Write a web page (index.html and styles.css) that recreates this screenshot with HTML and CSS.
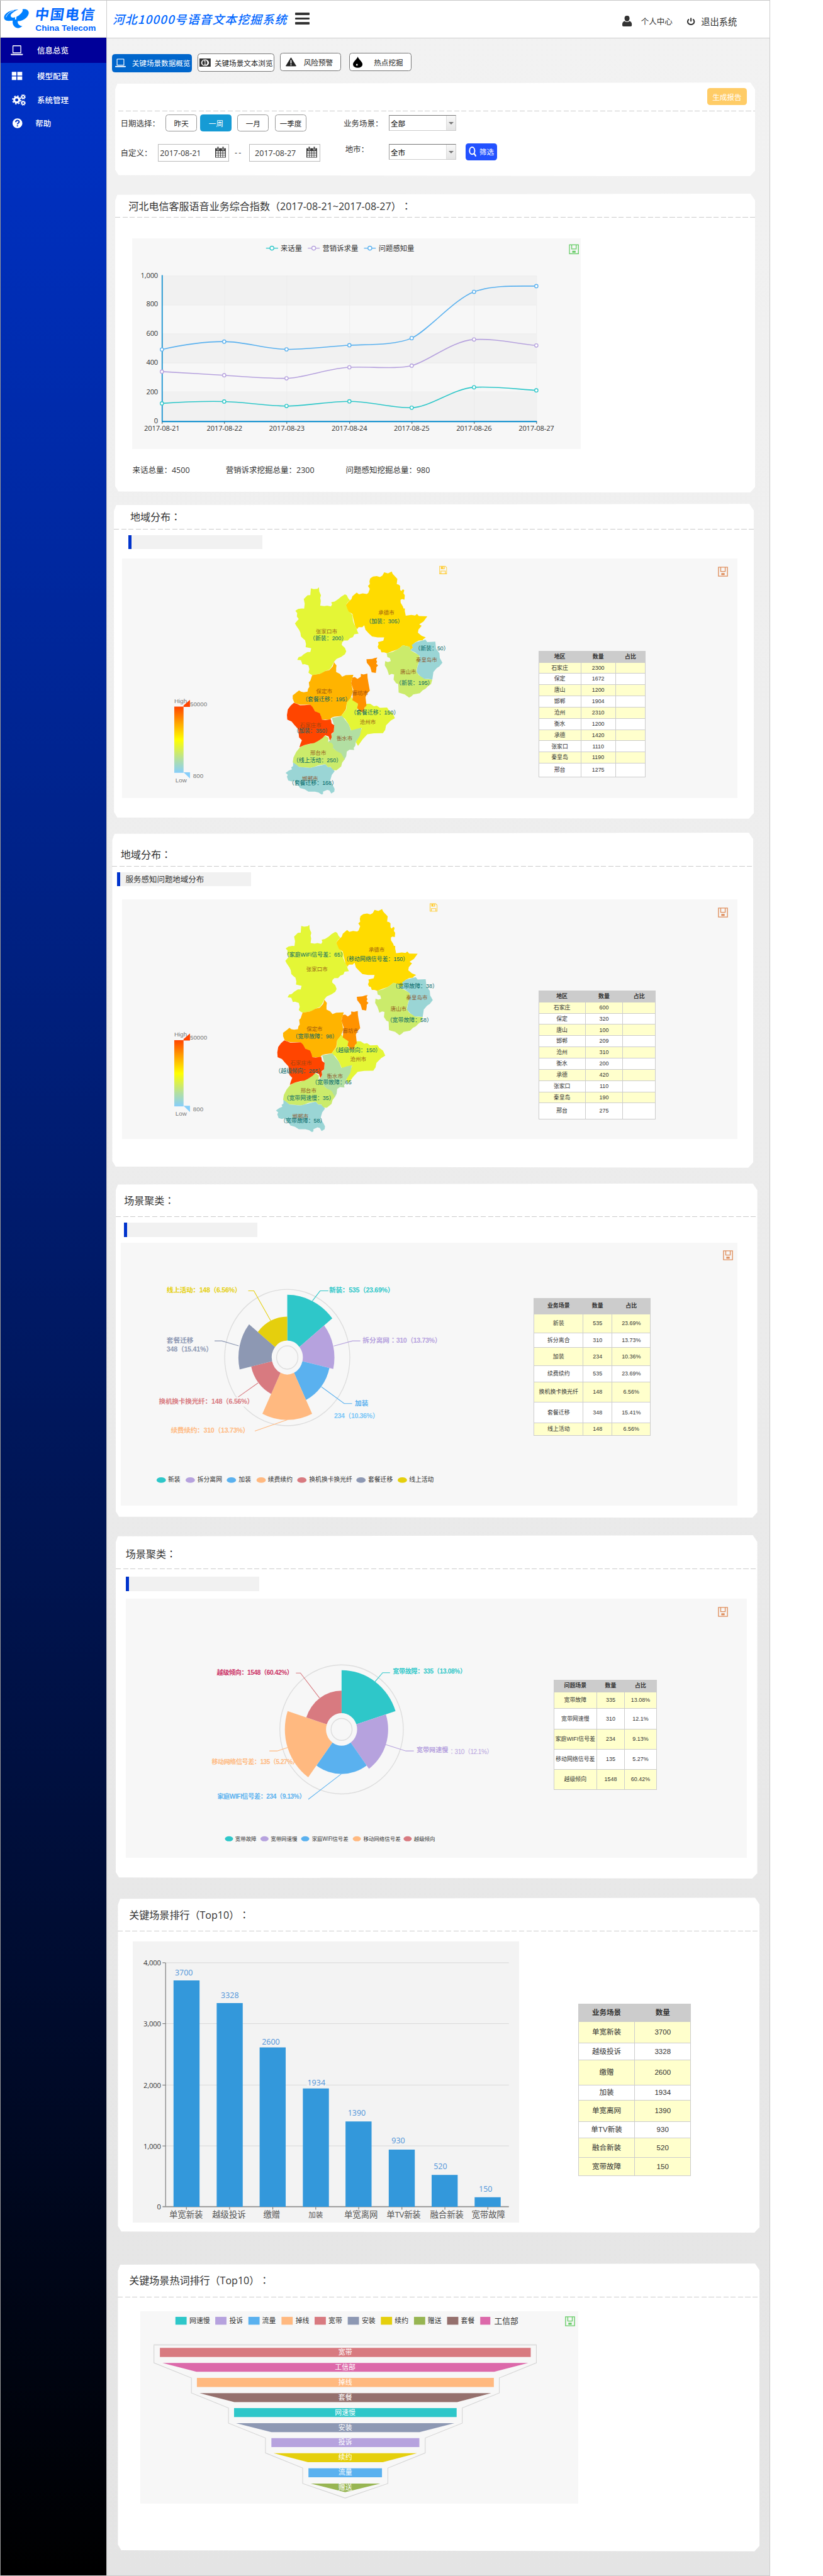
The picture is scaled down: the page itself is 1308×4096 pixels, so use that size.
FILE: index.html
```html
<!DOCTYPE html>
<html lang="zh-CN">
<head>
<meta charset="utf-8">
<title>河北10000号语音文本挖掘系统</title>
<link rel="stylesheet" href="styles.css">
</head>
<body>
<svg class="defs" width="0" height="0" aria-hidden="true">
  <symbol id="save" viewBox="0 0 18 18"><path d="M1 1H17V17H1Z M5 1V8.500H13V1" fill="none" stroke="currentColor" stroke-width="1.500"/><path d="M6 11.500H12V15H6Z" fill="currentColor"/></symbol>
  <symbol id="floppy" viewBox="0 0 14 15"><path d="M.7.7H10.500L13.300 3.500V14.300H.7Z M3 14V9.500H11V14" fill="none" stroke="currentColor" stroke-width="1.200"/><path d="M3 1H9.500V6H3Z M6.500 2V5H8V2Z" fill="currentColor" fill-rule="evenodd"/></symbol>
  <symbol id="laptop" viewBox="0 0 22 18"><path d="M4 1.500Q4 .8 4.800 .8H17.200Q18 .8 18 1.500V13.500H4Z" fill="none" stroke="currentColor" stroke-width="1.500"/><path d="M0 15.300H22V16.500Q22 17.600 20 17.600H2Q0 17.600 0 16.500Z" fill="currentColor"/></symbol>
  <symbol id="calendar" viewBox="0 0 19 20"><path d="M0 3H19V20H0Z" fill="currentColor"/><path d="M3.500 0H6.500V6H3.500ZM12.500 0H15.500V6H12.500Z" fill="currentColor" stroke="#fff" stroke-width=".8"/><path d="M1.500 8H5V11H1.500ZM6 8H9V11H6ZM10 8H13V11H10ZM14 8H17.500V11H14ZM1.500 12H5V15H1.500ZM6 12H9V15H6ZM10 12H13V15H10ZM14 12H17.500V15H14ZM1.500 16H5V18.700H1.500ZM6 16H9V18.700H6ZM10 16H13V18.700H10ZM14 16H17.500V18.700H14Z" fill="#fff"/></symbol>
  <linearGradient id="heat" x1="0" y1="0" x2="0" y2="1"><stop offset="0" stop-color="#ff4500"/><stop offset=".25" stop-color="#ffa500"/><stop offset=".5" stop-color="#ffff00"/><stop offset=".8" stop-color="#b2dfa2"/><stop offset="1" stop-color="#87cefa"/></linearGradient>
  <g id="hebei">
    <path fill="#e4f636" d="M163 148L178 152 198 150 206 142 208 165 217 185 213 200 216 215 213 240 235 243 250 240 270 244 276 234 272 222 290 218 310 205 325 192 345 180 355 185 362 200 372 212 360 222 350 238 368 272 385 290 388 320 395 340 407 362 412 378 418 390 395 393 388 408 372 414 360 427 340 427 330 437 328 450 345 466 352 485 345 500 325 514 300 525 287 540 275 565 262 582 240 590 222 602 210 605 170 612 158 605 150 598 155 580 150 560 130 553 118 555 110 532 90 530 98 515 112 512 125 500 145 488 160 488 165 468 135 462 137 445 132 425 120 415 110 405 107 385 100 370 85 348 78 335 98 312 88 298 90 280 80 268 95 258 115 255 127 256 130 230 125 205 145 185 160 184Z"/>
    <path fill="#ffdb00" d="M555 62L575 68 595 58 600 70 607 78 625 97 622 125 633 128 640 135 640 155 646 162 655 153 662 158 658 175 665 185 663 208 650 205 642 210 643 225 655 245 658 255 665 255 665 270 670 294 700 290 720 293 730 285 740 296 785 297 765 325 742 340 755 348 738 368 735 385 755 402 777 410 765 418 760 425 740 427 720 437 705 452 708 465 695 478 690 460 675 457 655 452 640 465 625 475 595 485 570 495 555 490 540 490 535 475 525 472 520 460 525 447 522 435 550 428 555 410 520 410 490 405 472 388 455 370 448 345 438 355 418 355 410 366 400 350 395 330 390 310 385 285 365 272 350 238 362 222 380 205 385 190 408 170 420 180 440 175 462 178 470 172 478 150 468 135 478 125 476 110 480 95 495 85 515 82 532 87 545 80Z"/>
    <path fill="#cbeb6b" d="M568 495L600 487 625 475 640 465 655 452 675 457 690 460 697 480 742 505 745 530 735 555 727 590 740 612 775 632 812 635 805 660 790 670 775 685 760 693 745 708 710 715 700 725 688 732 665 715 632 705 630 660 618 655 605 635 608 608 595 605 580 612 577 600 570 580 558 560 560 537 575 542 590 537 585 520 572 515Z"/>
    <path fill="#9ad5d5" d="M702 450L725 435 745 430 765 425 775 422 785 435 828 433 832 470 850 495 852 520 866 545 850 565 835 575 818 595 812 635 790 632 770 632 745 615 728 595 732 570 738 550 745 510 720 490 695 478 708 465Z"/>
    <path fill="#ff9200" d="M460 527L490 525 505 520 518 518 512 530 517 540 512 550 522 560 513 570 513 580 510 600 488 597 485 585 480 568 462 545Z"/>
    <path fill="#ffb400" d="M170 612L210 605 222 600 240 590 262 585 280 565 287 542 292 550 300 560 298 575 298 595 318 605 330 620 350 612 390 610 378 650 388 700 375 735 355 760 350 795 325 830 290 834 275 838 265 850 218 850 215 825 185 805 160 770 105 770 75 760 66 738 66 720 85 705 100 693 110 700 125 703 145 700 148 685 155 675 152 650 160 642Z"/>
    <path fill="#e4f636" d="M380 728L388 745 415 765 410 795 440 812 460 765 480 765 500 778 515 775 532 787 570 785 580 800 600 815 612 842 590 855 565 880 560 905 548 922 500 923 465 928 440 955 415 990 403 970 420 935 435 895 410 900 380 910 365 875 345 845 325 830 352 795 355 760Z"/>
    <path fill="#ff9200" d="M430 605L445 608 465 603 466 625 470 650 478 695 463 710 455 730 460 775 450 785 445 810 420 805 418 795 410 790 415 765 385 745 390 690 378 655 385 625 398 622 412 632 430 620Z"/>
    <path fill="#b2dfa2" d="M275 840L300 836 330 830 345 850 365 875 378 908 410 898 433 893 430 915 425 935 403 970 400 990 392 1000 394 1012 370 1010 355 1020 352 1045 342 1065 325 1045 280 1000 255 968 268 960 275 925 285 915 288 885Z"/>
    <path fill="#cbeb6b" d="M240 935L258 948 255 970 275 975 283 988 280 1000 300 1018 325 1030 343 1062 330 1080 325 1100 300 1120 275 1120 270 1102 255 1104 240 1088 215 1092 200 1095 180 1103 160 1108 130 1105 100 1103 66 1078 70 1052 85 1022 105 998 130 985 160 980 200 965 220 948Z"/>
    <path fill="#ff4500" d="M72 760L90 766 105 773 130 772 160 770 172 782 185 805 210 815 217 830 222 850 240 852 270 848 274 870 288 880 285 915 272 925 274 945 265 962 258 940 240 933 225 948 200 965 180 975 160 978 130 985 115 992 102 998 107 980 115 960 100 945 95 900 75 878 60 860 37 850 35 825 40 795 55 775Z"/>
    <path fill="#9ad5d5" d="M68 1078L85 1090 100 1103 160 1108 180 1103 200 1098 240 1088 255 1104 268 1103 290 1125 275 1145 265 1180 280 1200 290 1220 288 1235 272 1245 262 1228 250 1225 228 1235 228 1247 220 1250 205 1240 185 1235 150 1235 130 1222 105 1215 92 1195 80 1190 78 1175 60 1180 42 1175 35 1155 40 1145 28 1135 45 1122 62 1115 58 1105 68 1098Z"/>
  </g>
</svg>

<div class="page">
  <aside class="sidebar">
    <div class="brand">
      <svg class="brand-mark" viewBox="0 0 46 36"><g fill="#0080ff"><path d="M1 18C-2 9 10 2 26 1C15 6 9 12 14 15C18 17 25 14 30 9C33 6 35 2 33 1C43-1 47 6 43 12C39 19 31 22 25 22C24 26 27 30 33 31C29 34 26 35 23 34C17 32 15 26 16 21C8 22 3 22 1 18Z"/></g><path d="M21 19C21 12 24 7 29 4" fill="none" stroke="#fff" stroke-width="2.200"/><path d="M4 15C6 9 12 5 18 3" fill="none" stroke="#fff" stroke-width="1"/></svg>
      <div class="brand-name"><span class="brand-cn">中国电信</span><span class="brand-en">China Telecom</span></div>
    </div>
    <nav class="menu">
      <a class="menu-item is-active"><svg class="menu-icon" viewBox="0 0 22 18"><use href="#laptop"/></svg>信息总览</a>
      <a class="menu-item"><svg class="menu-icon" viewBox="0 0 22 18"><path fill="#fff" d="M2 1.500h8v6.500h-8zM11.800 1.500h8.700v6.500h-8.700zM2 9.500h8v6.500h-8zM11.800 9.500h8.700v6.500h-8.700z"/></svg>模型配置</a>
      <a class="menu-item"><svg class="menu-icon menu-icon--gears" viewBox="0 0 25 20"><g fill="none" stroke="#fff"><circle cx="8.500" cy="10" r="4.500" stroke-width="3.500"/><circle cx="8.500" cy="10" r="7.200" stroke-width="2" stroke-dasharray="2.800 2.850"/><circle cx="20" cy="4.500" r="2.500" stroke-width="2"/><circle cx="20" cy="4.500" r="4" stroke-width="1.200" stroke-dasharray="1.600 1.540"/><circle cx="20" cy="15.500" r="2.500" stroke-width="2"/><circle cx="20" cy="15.500" r="4" stroke-width="1.200" stroke-dasharray="1.600 1.540"/></g></svg>系统管理</a>
      <a class="menu-item menu-item--help"><svg class="menu-icon" viewBox="0 0 22 18"><circle cx="12" cy="9" r="8.800" fill="#fff"/><path d="M9 7C9 3 15 3 15 6.500C15 9 12 8.500 12 11M12 12.500V14.500" fill="none" stroke="#0031c4" stroke-width="2.200"/></svg>帮助</a>
    </nav>
  </aside>

  <div class="content">
    <header class="topbar">
      <svg class="system-title" viewBox="0 0 315 30"><text x="1" y="23" textLength="310" lengthAdjust="spacing">河北10000号语音文本挖掘系统</text></svg>
      <span class="burger"><i></i><i></i><i></i></span>
      <svg class="icon-user" viewBox="0 0 17 19"><path fill="#333" d="M8.500 0C12 0 13 2 13 5C13 8 11 10 8.500 10C6 10 4 8 4 5C4 2 5 0 8.500 0ZM4 9.500Q8.500 13 13 9.500Q17 11 17 15V17Q17 19 15 19H2Q0 19 0 17V15Q0 11 4 9.500Z"/></svg>
      <span class="user-link">个人中心</span>
      <svg class="icon-power" viewBox="0 0 16 14"><path d="M4.500 3A5.800 5.200 0 1 0 11.500 3M8 .5V7" fill="none" stroke="#333" stroke-width="2.300"/></svg>
      <span class="logout">退出系统</span>
    </header>

    <div class="tabs">
      <a class="tab tab--data is-current"><svg class="tab-icon" viewBox="0 0 22 18"><use href="#laptop"/></svg>关键场景数据概览</a>
      <a class="tab tab--text"><svg class="tab-money" viewBox="0 0 20 15"><rect width="20" height="15" fill="#333"/><ellipse cx="10" cy="7.500" rx="7" ry="6" fill="#fff"/><ellipse cx="9.500" cy="7.500" rx="4.500" ry="4.800" fill="#333"/><path d="M8 4.500L10 3.800V11M8 11H12" stroke="#fff" fill="none" stroke-width="1.200"/></svg>关键场景文本浏览</a>
      <a class="tab tab--risk"><svg class="tab-warn" viewBox="0 0 20 17"><path d="M10 .5L19.500 16H.5Z" fill="#222" stroke="#222" stroke-linejoin="round"/><path d="M10 5V11.500M10 12.800V15" stroke="#fff" stroke-width="2"/></svg>风险预警</a>
      <a class="tab tab--hot"><svg class="tab-drop" viewBox="0 0 17 20"><path d="M8.500 0C10 5 17 9 17 14A8.500 6 0 0 1 0 14C0 9 7 5 8.500 0Z"/><path d="M7 12.500Q9 14 8.500 15.500Q7 17 5.500 15.500Q5 14 7 12.500Z" fill="#fff"/></svg>热点挖掘</a>
    </div>

    <section class="panel panel--filter">
      <div class="filter-head"><button class="btn btn--report">生成报告</button></div>
      <div class="rule"></div>
      <div class="filter-row">
        <label class="filter-label">日期选择<span class="colon">：</span></label>
        <button class="btn btn--range">昨天</button><button class="btn btn--range is-on">一周</button><button class="btn btn--range btn--month">一月</button><button class="btn btn--range btn--month">一季度</button>
        <label class="filter-label filter-label--scene">业务场景<span class="colon">：</span></label>
        <span class="select">全部<i></i></span>
      </div>
      <div class="filter-row filter-row--custom">
        <label class="filter-label">自定义<span class="colon">：</span></label>
        <span class="date">2017-08-21<svg viewBox="0 0 19 20"><use href="#calendar"/></svg></span>
        <span class="dash">- -</span>
        <span class="date date--end">2017-08-27<svg viewBox="0 0 19 20"><use href="#calendar"/></svg></span>
        <label class="filter-label filter-label--city">地市<span class="colon">：</span></label>
        <span class="select">全市<i></i></span>
        <button class="btn btn--search"><svg viewBox="0 0 14 18"><ellipse cx="6" cy="7.500" rx="4.600" ry="6.300" fill="none" stroke="#fff" stroke-width="2.200"/><path d="M9 12L13 17.500" stroke="#fff" stroke-width="2.400"/></svg>筛选</button>
      </div>
    </section>

    <section class="panel panel--trend">
      <h2>河北电信客服语音业务综合指数（2017-08-21~2017-08-27）<span class="colon">：</span></h2>
      <div class="rule"></div>
      <svg class="stage stage--trend" viewBox="235 424.500 800 376.500">
        <g stroke-width="1.500" fill="#fff">
          <g stroke="#2ec7c9"><path d="M473.500 442H495"/><circle cx="484" cy="442" r="3.500"/></g>
          <g stroke="#b6a2de"><path d="M548 442H569"/><circle cx="558.500" cy="442" r="3.500"/></g>
          <g stroke="#5ab1ef"><path d="M648 442H669"/><circle cx="658.500" cy="442" r="3.500"/></g>
        </g>
        <g class="t-legend"><text x="499.500" y="442">来话量</text><text x="574" y="442">营销诉求量</text><text x="674" y="442">问题感知量</text></g>
        <path fill="#f1f1f1" d="M288 491H955V543H288ZM288 595H955V647H288ZM288 698.500H955V750H288Z"/>
        <path stroke="#ececec" fill="none" d="M288 491.500H955M288 543.500H955M288 594.500H955M288 646.500H955M288 698H955M399.500 491V750M510.500 491V750M622.500 491V750M733.500 491V750M844.500 491V750M955.500 491V750"/>
        <path d="M288.500 490V751" stroke="#0088cc" stroke-width="1.800"/>
        <path d="M399.500 751V755M510.500 751V755M622.500 751V755M733.500 751V755M844.500 751V755M955.500 751V755M288.500 751V755" stroke="#333"/>
        <path d="M288 751H956" stroke="#0088cc" stroke-width="2.400"/>
        <g fill="none" stroke-width="1.800">
          <path stroke="#5ab1ef" d="M288 622.600C325 614 362 608.500 399 608.500S473 622 510 622.300S590 616.500 622 615S705 615 733 602.300S810 532 844 519.800S918 509.600 955 509.600"/>
          <path stroke="#b6a2de" d="M288 662C325 664.500 362 666 399 668.500S480 674.500 510 674S585 656 622 654.300S705 658 733 651.400S805 607 844 604.800S918 612 955 615.400"/>
          <path stroke="#2ec7c9" d="M288 718.600C325 716 362 714.500 399 715.300S473 723.300 510 723.300S585 715 622 715S700 727 733 726.300S807 692 844 690S918 693 955 695.400"/>
        </g>
        <g fill="#fff" stroke-width="1.500">
          <g stroke="#5ab1ef"><circle cx="288" cy="622.600" r="3"/><circle cx="399" cy="608.500" r="3"/><circle cx="510" cy="622.300" r="3"/><circle cx="622" cy="615" r="3"/><circle cx="733" cy="602.300" r="3"/><circle cx="844" cy="519.800" r="3"/><circle cx="955" cy="509.600" r="3"/></g>
          <g stroke="#b6a2de"><circle cx="288" cy="662" r="3"/><circle cx="399" cy="668.500" r="3"/><circle cx="510" cy="674" r="3"/><circle cx="622" cy="654.300" r="3"/><circle cx="733" cy="651.400" r="3"/><circle cx="844" cy="604.800" r="3"/><circle cx="955" cy="615.400" r="3"/></g>
          <g stroke="#2ec7c9"><circle cx="288" cy="718.600" r="3"/><circle cx="399" cy="715.300" r="3"/><circle cx="510" cy="723.300" r="3"/><circle cx="622" cy="715" r="3"/><circle cx="733" cy="726.300" r="3"/><circle cx="844" cy="690" r="3"/><circle cx="955" cy="695.400" r="3"/></g>
        </g>
        <g class="t-axis t-end"><text x="281" y="490">1,000</text><text x="281" y="541">800</text><text x="281" y="593.500">600</text><text x="281" y="645">400</text><text x="281" y="697">200</text><text x="281" y="749">0</text></g>
        <g class="t-axis t-mid"><text x="288" y="762.500">2017-08-21</text><text x="399.500" y="762.500">2017-08-22</text><text x="510.500" y="762.500">2017-08-23</text><text x="622" y="762.500">2017-08-24</text><text x="733" y="762.500">2017-08-25</text><text x="844" y="762.500">2017-08-26</text><text x="955" y="762.500">2017-08-27</text></g>
        <use href="#save" x="1013" y="435" width="18" height="18" color="#66cc66"/>
      </svg>
      <div class="totals"><span>来话总量<b class="colon">：</b>4500</span><span>营销诉求挖掘总量<b class="colon">：</b>2300</span><span>问题感知挖掘总量<b class="colon">：</b>980</span></div>
    </section>

    <section class="panel panel--region">
      <h2>地域分布<span class="colon">：</span></h2>
      <div class="rule"></div>
      <div class="tag"></div>
      <div class="stage stage--map">
        <svg class="chart chart--map" viewBox="218 996 741 427">
          <g transform="translate(311 1246)" class="t-scale">
            <rect y="14" width="16.500" height="118" fill="url(#heat)"/><path d="M16.500 14.500V12L28 2V14.500Z" fill="#ff4500"/><path d="M16.500 131H28V142Z" fill="#87cefa"/>
            <text y="3.500">High</text><text x="28" y="9">50000</text><text x="33.500" y="137">800</text><text x="2" y="145">Low</text>
          </g>
          <g transform="translate(500 1000) scale(.33333)">
            <use href="#hebei"/>
            <g class="t-city"><text x="566" y="275">承德市</text><text x="247" y="376">张家口市</text><text x="781" y="529">秦皇岛市</text><text x="683" y="591">唐山市</text><text x="234" y="697">保定市</text><text x="427" y="707">廊坊市</text><text x="467" y="859">沧州市</text><text x="162" y="879">石家庄市</text><text x="343" y="949">衡水市</text><text x="202" y="1026">邢台市</text><text x="159" y="1163">邯郸市</text></g>
            <g class="t-value"><text x="556" y="325">（加装：305）</text><text x="256" y="415">（新装：200）</text><text x="810" y="469">（新装：50）</text><text x="717" y="653">（新装：195）</text><text x="246" y="740">（套餐迁移：195）</text><text x="505" y="811">（套餐迁移：150）</text><text x="169" y="908">（加装：350）</text><text x="198" y="1069">（线上活动：250）</text><text x="174" y="1190">（套餐迁移：168）</text></g>
          </g>
          <use href="#floppy" x="783" y="1009" width="14" height="15" color="#ffcc33"/>
        </svg>
        <table class="grid grid--region">
          <tr><th>地区</th><th>数量</th><th>占比</th></tr>
          <tr><td>石家庄</td><td>2300</td><td></td></tr><tr><td>保定</td><td>1672</td><td></td></tr><tr><td>唐山</td><td>1200</td><td></td></tr><tr><td>邯郸</td><td>1904</td><td></td></tr><tr><td>沧州</td><td>2310</td><td></td></tr><tr><td>衡水</td><td>1200</td><td></td></tr><tr><td>承德</td><td>1420</td><td></td></tr><tr><td>张家口</td><td>1110</td><td></td></tr><tr><td>秦皇岛</td><td>1190</td><td></td></tr><tr><td>邢台</td><td>1275</td><td></td></tr>
        </table>
        <svg class="save" viewBox="0 0 18 18"><use href="#save"/></svg>
      </div>
    </section>

    <section class="panel panel--service">
      <h2>地域分布<span class="colon">：</span></h2>
      <div class="rule"></div>
      <div class="tag">服务感知问题地域分布</div>
      <div class="stage stage--map">
        <svg class="chart chart--map" viewBox="218 1603 741 427">
          <g transform="translate(311 1840)" class="t-scale">
            <rect y="14" width="16.500" height="118" fill="url(#heat)"/><path d="M16.500 14.500V12L28 2V14.500Z" fill="#ff4500"/><path d="M16.500 131H28V142Z" fill="#87cefa"/>
            <text y="3.500">High</text><text x="28" y="9">50000</text><text x="33.500" y="137">800</text><text x="2" y="145">Low</text>
          </g>
          <g transform="translate(500 1590) scale(.33333)">
            <use href="#hebei" x="-51.500" y="33"/>
            <g class="t-city"><text x="514.500" y="308">承德市</text><text x="195.500" y="409">张家口市</text><text x="729.500" y="562">秦皇岛市</text><text x="631.500" y="624">唐山市</text><text x="182.500" y="730">保定市</text><text x="375.500" y="740">廊坊市</text><text x="415.500" y="892">沧州市</text><text x="110.500" y="912">石家庄市</text><text x="291.500" y="982">衡水市</text><text x="150.500" y="1059">邢台市</text><text x="107.500" y="1196">邯郸市</text></g>
            <g class="t-value"><text x="184" y="335">（家庭WiFi信号差：65）</text><text x="510" y="359">（移动网络信号差：150）</text><text x="720" y="503">（宽带故障：38）</text><text x="690" y="686">（宽带故障：58）</text><text x="185" y="773">（宽带故障：98）</text><text x="408" y="845">（越级倾向：150）</text><text x="102" y="958">（越级倾向：265）</text><text x="274" y="1019">（宽带故障：65</text><text x="153" y="1103">（宽带网速慢：35）</text><text x="120" y="1223">（宽带故障：58）</text></g>
          </g>
          <use href="#floppy" x="766" y="1610" width="14" height="15" color="#ffcc33"/>
        </svg>
        <table class="grid grid--service">
          <tr><th>地区</th><th>数量</th><th>占比</th></tr>
          <tr><td>石家庄</td><td>600</td><td></td></tr><tr><td>保定</td><td>320</td><td></td></tr><tr><td>唐山</td><td>100</td><td></td></tr><tr><td>邯郸</td><td>209</td><td></td></tr><tr><td>沧州</td><td>310</td><td></td></tr><tr><td>衡水</td><td>200</td><td></td></tr><tr><td>承德</td><td>420</td><td></td></tr><tr><td>张家口</td><td>110</td><td></td></tr><tr><td>秦皇岛</td><td>190</td><td></td></tr><tr><td>邢台</td><td>275</td><td></td></tr>
        </table>
        <svg class="save" viewBox="0 0 18 18"><use href="#save"/></svg>
      </div>
    </section>

    <section class="panel panel--scene">
      <h2>场景聚类<span class="colon">：</span></h2>
      <div class="rule"></div>
      <div class="tag"></div>
      <div class="stage stage--scene">
        <svg class="chart chart--scene" viewBox="215 2214 736 469">
          <g transform="translate(511.500 2418.600) scale(1 1.090)">
            <circle r="111.500" fill="none" stroke="#ddd" stroke-width="1.500"/><circle r="19" fill="none" stroke="#ddd" stroke-width="1.500"/>
            <path fill="#2ec7c9" d="M0-27.700L0-102.600A102.600 102.600 0 0 1 80.200-64L21.700-17.300A27.700 27.700 0 0 0 0-27.700Z"/>
            <path fill="#b6a2de" d="M21.700-17.300L65.700-52.400A84 84 0 0 1 81.900 18.700L27 6.200A27.700 27.700 0 0 0 21.700-17.300Z"/>
            <path fill="#5ab1ef" d="M27 6.200L75.100 17.100A77 77 0 0 1 33.400 69.400L12 25A27.700 27.700 0 0 0 27 6.200Z"/>
            <path fill="#ffb980" d="M12 25L44.300 91.900A102 102 0 0 1-44.300 91.900L-12 25A27.700 27.700 0 0 0 12 25Z"/>
            <path fill="#d87a80" d="M-12 25L-28.600 59.500A66 66 0 0 1-64.300 14.700L-27 6.200A27.700 27.700 0 0 0-12 25Z"/>
            <path fill="#8d98b3" d="M-27 6.200L-84.800 19.400A87 87 0 0 1-68-54.200L-21.700-17.300A27.700 27.700 0 0 0-27 6.200Z"/>
            <path fill="#e5cf0d" d="M-21.700-17.300L-52.400-41.800A67 67 0 0 1 0-67L0-27.700A27.700 27.700 0 0 0-21.700-17.300Z"/>
          </g>
          <g fill="none" stroke-width="1.200">
            <path stroke="#2ec7c9" d="M556.200 2317.800L570 2299.800H584.700"/><path stroke="#b6a2de" d="M594.500 2398L627.800 2389H641.700"/><path stroke="#5ab1ef" d="M572.500 2471L613 2500.600H627"/><path stroke="#ffb980" d="M511.500 2529.600L453.700 2549.600"/><path stroke="#d87a80" d="M459.400 2463.900L424 2489"/><path stroke="#8d98b3" d="M425 2397.800L395 2389H382"/><path stroke="#e5cf0d" d="M482 2352.900L452 2299.800H442"/>
          </g>
          <rect x="416" y="2490" width="34" height="16" fill="#f7f7f7"/>
          <g class="t-slice">
            <text x="586" y="2298.600" fill="#2ec7c9" textLength="116">新装：535（23.69%）</text><text x="645.700" y="2388" fill="#b6a2de">拆分离网</text><text x="694" y="2388" fill="#b6a2de" textLength="92">：310（13.73%）</text><text x="632" y="2499.500" fill="#5ab1ef">加装</text><text x="595" y="2522" fill="#7cc8f7" textLength="80">234（10.36%）</text><text x="304" y="2548" fill="#ffb980" textLength="140">续费续约：310（13.73%）</text><text x="282.800" y="2497" fill="#d87a80" textLength="169">换机换卡换光纤：148（6.56%）</text><text x="296.600" y="2388" fill="#8d98b3">套餐迁移</text><text x="296.600" y="2403.500" fill="#8d98b3" textLength="82">348（15.41%）</text><text x="296.600" y="2298.600" fill="#e5cf0d" textLength="133">线上活动：148（6.56%）</text>
          </g>
          <g><ellipse cx="287" cy="2637" rx="8.300" ry="5" fill="#2ec7c9"/><ellipse cx="338.700" cy="2637" rx="8.300" ry="5" fill="#b6a2de"/><ellipse cx="412" cy="2637" rx="8.300" ry="5" fill="#5ab1ef"/><ellipse cx="465" cy="2637" rx="8.300" ry="5" fill="#ffb980"/><ellipse cx="537.500" cy="2637" rx="8.300" ry="5" fill="#d87a80"/><ellipse cx="642.800" cy="2637" rx="8.300" ry="5" fill="#8d98b3"/><ellipse cx="716.500" cy="2637" rx="8.300" ry="5" fill="#e5cf0d"/></g>
          <g class="t-key"><text x="299" y="2636.500">新装</text><text x="351.500" y="2636.500">拆分离网</text><text x="425" y="2636.500">加装</text><text x="477" y="2636.500">续费续约</text><text x="550.500" y="2636.500">换机换卡换光纤</text><text x="655.500" y="2636.500">套餐迁移</text><text x="728.500" y="2636.500">线上活动</text></g>
        </svg>
        <table class="grid grid--scene">
          <tr><th>业务场景</th><th>数量</th><th>占比</th></tr>
          <tr><td>新装</td><td>535</td><td>23.69%</td></tr><tr><td>拆分离合</td><td>310</td><td>13.73%</td></tr><tr><td>加装</td><td>234</td><td>10.36%</td></tr><tr><td>续费续约</td><td>535</td><td>23.69%</td></tr><tr><td>换机换卡换光纤</td><td>148</td><td>6.56%</td></tr><tr><td>套餐迁移</td><td>348</td><td>15.41%</td></tr><tr><td>线上活动</td><td>148</td><td>6.56%</td></tr>
        </table>
        <svg class="save" viewBox="0 0 18 18"><use href="#save"/></svg>
      </div>
    </section>

    <section class="panel panel--problem">
      <h2>场景聚类<span class="colon">：</span></h2>
      <div class="rule"></div>
      <div class="tag"></div>
      <div class="stage stage--problem">
        <svg class="chart chart--problem" viewBox="224 2849 762 462">
          <g transform="translate(608.300 3082) scale(1 1.045)">
            <circle r="110" fill="none" stroke="#ddd" stroke-width="1.500"/><circle r="18.700" fill="none" stroke="#ddd" stroke-width="1.500"/>
            <path fill="#2ec7c9" d="M0-27.700L0-101A101 101 0 0 1 96.100-31.200L26.300-8.600A27.700 27.700 0 0 0 0-27.700Z"/>
            <path fill="#b6a2de" d="M26.300-8.600L78.900-25.600A83 83 0 0 1 48.800 67.100L16.300 22.400A27.700 27.700 0 0 0 26.300-8.600Z"/>
            <path fill="#5ab1ef" d="M16.300 22.400L44.700 61.500A76 76 0 0 1-44.700 61.500L-16.300 22.400A27.700 27.700 0 0 0 16.300 22.400Z"/>
            <path fill="#ffb980" d="M-16.300 22.400L-59.400 81.700A101 101 0 0 1-96.100-31.200L-26.300-8.600A27.700 27.700 0 0 0-16.300 22.400Z"/>
            <path fill="#d87a80" d="M-26.300-8.600L-62.800-20.400A66 66 0 0 1 0-66L0-27.700A27.700 27.700 0 0 0-26.300-8.600Z"/>
          </g>
          <g fill="none" stroke-width="1.200">
            <path stroke="#2ec7c9" d="M667.700 2997L681.500 2981H694.600"/><path stroke="#b6a2de" d="M687 3109L723 3120.400H737"/><path stroke="#5ab1ef" d="M607.500 3161.600L549 3206.500"/><path stroke="#ffb980" d="M513 3114L493.500 3120.400H479.700"/><path stroke="#d87a80" d="M569 3026L535 2981.500H527"/>
          </g>
          <g class="t-slice t-slice--small">
            <text x="699.400" y="2979" fill="#2ec7c9" textLength="131">宽带故障：335（13.08%）</text><text x="741.800" y="3119" fill="#b6a2de">宽带网速慢</text><text x="799" y="3121.600" fill="#b6a2de" class="t-plain" textLength="79">：310（12.1%）</text><text x="387" y="3202" fill="#5ab1ef" textLength="157">家庭WIFI信号差：234（9.13%）</text><text x="377" y="3140" fill="#ffb980" textLength="155">移动网络信号差：135（5.27%）</text><text x="386" y="2980.400" fill="#cc3366" textLength="136">越级倾向：1548（60.42%）</text>
          </g>
          <g><ellipse cx="407.800" cy="3277" rx="7.300" ry="4.500" fill="#2ec7c9"/><ellipse cx="471" cy="3277" rx="7.300" ry="4.500" fill="#b6a2de"/><ellipse cx="543.500" cy="3277" rx="7.300" ry="4.500" fill="#5ab1ef"/><ellipse cx="635.500" cy="3277" rx="7.300" ry="4.500" fill="#ffb980"/><ellipse cx="726" cy="3277" rx="7.300" ry="4.500" fill="#d87a80"/></g>
          <g class="t-key t-key--small"><text x="418.700" y="3276.500">宽带故障</text><text x="482" y="3276.500">宽带网速慢</text><text x="555.400" y="3276.500" textLength="65">家庭WIFI信号差</text><text x="647" y="3276.500">移动网络信号差</text><text x="737" y="3276.500">越级倾向</text></g>
        </svg>
        <table class="grid grid--problem">
          <tr><th>问题场景</th><th>数量</th><th>占比</th></tr>
          <tr><td>宽带故障</td><td>335</td><td>13.08%</td></tr><tr><td>宽带网速慢</td><td>310</td><td>12.1%</td></tr><tr><td>家庭WIFI信号差</td><td>234</td><td>9.13%</td></tr><tr><td>移动网络信号差</td><td>135</td><td>5.27%</td></tr><tr><td>越级倾向</td><td>1548</td><td>60.42%</td></tr>
        </table>
        <svg class="save" viewBox="0 0 18 18"><use href="#save"/></svg>
      </div>
    </section>

    <section class="panel panel--rank">
      <h2>关键场景排行（Top10）<span class="colon">：</span></h2>
      <div class="rule"></div>
      <div class="rank-body">
        <svg class="stage stage--rank" viewBox="237 3460 688 501">
          <path d="M295 3498H907M295 3606.500H907M295 3716H907M295 3824.500H907" stroke="#ddd" stroke-width="1.500"/>
          <path d="M290 3498H295M290 3606.500H295M290 3716H295M290 3824.500H295M295.500 3498V3933M332.500 3933V3938M409.500 3933V3938M486.500 3933V3938M563 3933V3938M639.500 3933V3938M716.500 3933V3938M793 3933V3938M869.500 3933V3938" stroke="#555"/>
          <path d="M290 3932.700H907" stroke="#999" stroke-width="2"/>
          <path fill="#3398db" d="M309.600 3529.400h46.400V3933h-46.400zM386.500 3569.800h46.400V3933h-46.400zM463 3649h46.400V3933h-46.400zM540 3722h46.400V3933h-46.400zM616 3780.800h46.400V3933h-46.400zM693 3831h46.400V3933h-46.400zM769.400 3876h46.400V3933h-46.400zM846 3916h46.400V3933h-46.400z"/>
          <g class="t-axis t-end"><text x="287" y="3498">4,000</text><text x="287" y="3606.500">3,000</text><text x="287" y="3716">2,000</text><text x="287" y="3824.500">1,000</text><text x="287" y="3933">0</text></g>
          <rect x="547" y="3704" width="34" height="14" fill="#f3f3f3"/>
          <g class="t-bar"><text x="328" y="3516">3700</text><text x="410" y="3556">3328</text><text x="483" y="3639">2600</text><text x="564" y="3711.500">1934</text><text x="636" y="3766">1390</text><text x="710" y="3815">930</text><text x="785" y="3861">520</text><text x="865.500" y="3901">150</text></g>
          <g class="t-name"><text x="332" y="3946.500">单宽新装</text><text x="408.500" y="3946.500">越级投诉</text><text x="484.500" y="3946.500">缴赠</text><text x="563" y="3946.500" class="t-name--small">加装</text><text x="643.500" y="3946.500">单宽离网</text><text x="719.500" y="3946.500" textLength="61">单TV新装</text><text x="796.500" y="3946.500">融合新装</text><text x="870.500" y="3946.500">宽带故障</text></g>
        </svg>
        <table class="grid grid--rank">
          <tr><th>业务场景</th><th>数量</th></tr>
          <tr><td>单宽新装</td><td>3700</td></tr><tr><td>越级投诉</td><td>3328</td></tr><tr><td>缴赠</td><td>2600</td></tr><tr><td>加装</td><td>1934</td></tr><tr><td>单宽离网</td><td>1390</td></tr><tr><td>单TV新装</td><td>930</td></tr><tr><td>融合新装</td><td>520</td></tr><tr><td>宽带故障</td><td>150</td></tr>
        </table>
      </div>
    </section>

    <section class="panel panel--words">
      <h2>关键场景热词排行（Top10）<span class="colon">：</span></h2>
      <div class="rule"></div>
      <svg class="stage stage--words" viewBox="249.500 4119 781 343">
        <path fill="#2ec7c9" d="M312 4129h20v14h-20z"/><path fill="#b6a2de" d="M383 4129h20v14h-20z"/><path fill="#5ab1ef" d="M442 4129h20v14h-20z"/><path fill="#ffb980" d="M501 4129h20v14h-20z"/><path fill="#d87a80" d="M560 4129h20v14h-20z"/><path fill="#8d98b3" d="M619 4129h20v14h-20z"/><path fill="#e5cf0d" d="M678 4129h20v14h-20z"/><path fill="#97b552" d="M737 4129h20v14h-20z"/><path fill="#95706d" d="M796 4129h20v14h-20z"/><path fill="#dc69aa" d="M855 4129h18v14h-18z"/>
        <g class="t-word"><text x="337" y="4135">网速慢</text><text x="408" y="4135">投诉</text><text x="466.500" y="4135">流量</text><text x="526" y="4135">掉线</text><text x="584.700" y="4135">宽带</text><text x="644" y="4135">安装</text><text x="702.700" y="4135">续约</text><text x="761.500" y="4135">赠送</text><text x="820.700" y="4135">套餐</text><text x="880" y="4135.500" class="t-word--big">工信部</text></g>
        <path fill="none" stroke="#d4d4d4" stroke-width="1.200" d="M273.800 4178.700V4211L340.500 4237.800V4264.600L406.500 4291.400V4318.500L472.400 4344.900V4371.600L538.700 4398.400V4426L614.400 4452L690.500 4426V4398.400L757 4371.600V4344.900L823 4318.500V4291.400L889 4264.600V4237.800L955 4211V4178.700Z"/>
        <path stroke="#e0e0e0" stroke-width="2" d="M273.500 4179H955.500"/>
        <path fill="#d87a80" d="M284.400 4184.300H945V4200.500H284.400Z"/><path fill="#dc69aa" d="M289 4211.300H940.500L880 4227H349.500Z"/><path fill="#ffb980" d="M350.300 4237.800H879.300V4254H350.300Z"/><path fill="#95706d" d="M355 4265H874.500L814 4281H417Z"/><path fill="#2ec7c9" d="M416.500 4291.700H813V4307.700H416.500Z"/><path fill="#8d98b3" d="M420 4318.500H809L747 4334.500H483Z"/><path fill="#b6a2de" d="M483 4345H746.600V4361H483Z"/><path fill="#e5cf0d" d="M487 4372H742.600L681.500 4388H548Z"/><path fill="#5ab1ef" d="M549 4399H680V4415H549Z"/><path fill="#97b552" d="M553 4426H677L614.400 4441.500Z"/>
        <g class="t-funnel"><text x="614.500" y="4191.500">宽带</text><text x="614.500" y="4218">工信部</text><text x="614.500" y="4245">掉线</text><text x="614.500" y="4271.500">套餐</text><text x="614.500" y="4298.500">网速慢</text><text x="614.500" y="4325.500">安装</text><text x="614.500" y="4352">投诉</text><text x="614.500" y="4378.500">续约</text><text x="614.500" y="4405.500">流量</text><text x="614.500" y="4432.500">赠送</text></g>
        <use href="#save" x="1006" y="4128" width="18" height="18" color="#66cc66"/>
      </svg>
    </section>
  </div>
</div>
</body>
</html>
```
FILE: styles.css
```css
* { box-sizing: border-box; }
html { background: #fff; }
body {
  margin: 0;
  overflow: hidden;
  font-family: "Open Sans", "Noto Sans CJK SC", sans-serif;
  color: #333;
  text-spacing-trim: space-all;
}
.defs { position: absolute; }
.page {
  zoom: 0.8922;
  display: flex;
  width: 1372px;
  height: 4591px;
  border-top: 1px solid #c8c8c8;
  border-right: 1px solid #ccc;
  border-bottom: 2px solid #ccc;
}
.colon { font-family: "Noto Sans CJK TC", sans-serif; font-weight: 400; }

/* sidebar */
.sidebar {
  flex: none;
  width: 190px;
  border-left: 1px solid #999;
  border-right: 1px solid #ccc;
  background: linear-gradient(#0033cc, #000);
}
.brand {
  display: flex;
  height: 66px;
  padding-left: 6px;
  background: #fff;
  border-bottom: 1px solid #ccc;
}
.brand-mark { width: 46px; height: 36px; margin-top: 15px; }
.brand-name { display: flex; flex-direction: column; margin-left: 10px; color: #0066ff; }
.brand-cn {
  margin-top: 7px;
  font: bold 25px/32px "Noto Sans CJK SC", sans-serif;
  letter-spacing: 2px;
  transform: skewX(-8deg);
  white-space: nowrap;
}
.brand-en { font: bold 15.300px/20px "Liberation Sans", sans-serif; white-space: nowrap; }
.menu { display: flex; flex-direction: column; color: #fff; font-size: 14px; font-weight: 500; }
.menu-item { display: flex; align-items: center; height: 42px; padding-left: 18px; }
.menu-item.is-active { height: 45px; margin-bottom: 3px; background: #000099; }
.menu-icon { width: 22px; height: 18px; margin-right: 25px; }
.menu-icon--gears { width: 25px; height: 20px; margin: 0 20px 0 2px; }
.menu-item--help .menu-icon { margin-right: 22px; }

/* top bar */
.content { flex: 1; min-width: 0; background: linear-gradient(#f2f2f2, #e4e4e4); }
.topbar {
  display: flex;
  align-items: center;
  height: 67px;
  padding: 8px 0 0 10px;
  background: #fff;
  border-bottom: 2px solid #ccc;
}
.system-title { width: 315px; height: 30px; margin-top: -9px; }
.system-title text { font: italic 500 21px "Noto Sans CJK SC", sans-serif; fill: #0066ff; }
.burger { display: flex; flex-direction: column; gap: 4.500px; width: 26px; margin: -10px 0 0 11px; }
.burger i { height: 4px; border-radius: 1px; background: #333; }
.icon-user { width: 17px; height: 19px; margin: 0 16px 0 557px; }
.user-link { font-size: 14px; white-space: nowrap; }
.icon-power { width: 16px; height: 14px; margin: 0 10px 0 25px; }
.logout { font-size: 16px; white-space: nowrap; }

/* tabs */
.tabs { display: flex; height: 60px; padding: 26px 0 0 10px; font-size: 13px; }
.tab {
  display: flex;
  align-items: center;
  height: 33px;
  border: 1px solid #777;
  border-radius: 5px;
  background: #fff;
  color: #222;
  white-space: nowrap;
}
.tab--data { width: 142px; margin-top: 2px; padding-left: 4px; }
.tab--data.is-current { border-color: #0066cc; background: #0066cc; color: #fff; }
.tab--text { width: 137px; margin: 1px 0 0 10px; padding-left: 2px; }
.tab--risk { width: 109px; margin-left: 10px; padding-left: 9px; }
.tab--hot { width: 111px; margin-left: 14px; padding-left: 6px; }
.tab svg { flex: none; }
.tab-icon { width: 19px; height: 16px; margin-right: 11px; }
.tab-money { width: 20px; height: 15px; margin-right: 7px; }
.tab-warn { width: 19px; height: 17px; margin-right: 13px; }
.tab-drop { width: 17px; height: 20px; margin-right: 20px; }

/* panels */
.panel { position: relative; isolation: isolate; width: 1140px; }
.panel::before {
  content: "";
  position: absolute;
  inset: 0;
  z-index: -1;
  background: #fff;
  clip-path: polygon(0 13px, 4px 2px, calc(100% - 8px) 0, 100% 12px, 100% calc(100% - 10px), calc(100% - 9px) 100%, 6px calc(100% - 2px), 0 calc(100% - 12px));
}
.panel h2 {
  display: flex;
  align-items: center;
  margin: 0;
  padding: 0 0 0 20px;
  height: 59px;
  font-size: 18px;
  font-weight: 400;
  white-space: nowrap;
}
.rule { height: 1.200px; background: repeating-linear-gradient(90deg, #ccc 0 9px, transparent 9px 13px); }
.tag { display: flex; align-items: center; width: 238px; height: 25px; border-left: 6px solid #0033cc; background: #f1f1f1; font-size: 14px; }
.stage { background: #f7f7f7; }
div.stage { display: flex; align-items: flex-start; }
.stage, .chart { flex: none; }
svg.stage, .chart { display: block; }
.save { flex: none; width: 18px; height: 18px; margin-left: auto; color: #df8e5c; }

/* filters */
.panel--filter { height: 167px; margin: 19px 0 0 15px; }
.filter-head { display: flex; justify-content: flex-end; height: 50px; padding: 10px 15px 0 0; }
.panel--filter .rule { margin-left: 6px; }
.btn {
  font: 13px "Open Sans", "Noto Sans CJK SC", sans-serif;
  height: 30px;
  padding: 0;
  border: 1px solid #999;
  border-radius: 5px;
  background: #fff;
  color: #222;
}
.btn--report { width: 70px; border: 0; background: #ffcc66; color: #fff; }
.filter-row { display: flex; align-items: center; height: 30px; margin-top: 6px; padding-left: 9.600px; font-size: 14px; white-space: nowrap; }
.filter-row--custom { height: 31px; margin-top: 22.500px; }
.filter-label { width: 80.400px; }
.btn--range { width: 56px; margin-right: 6px; }
.btn--range.is-on { border-color: #169bd5; background: #169bd5; color: #fff; margin-right: 10px; }
.btn--month { margin-right: 11px; }
.filter-label--scene { margin-left: 55px; width: 81px; }
.filter-row--custom .filter-label { width: 66.400px; }
.filter-row--custom .filter-label--city { width: 78px; margin-left: 44px; padding-bottom: 14px; }
.select {
  display: flex;
  align-items: center;
  justify-content: space-between;
  width: 120px;
  height: 28px;
  padding-left: 2px;
  border: 1px solid #ccc;
  border-top: 1.500px solid #777;
  border-left-color: #999;
  background: #fff;
  color: #000;
  font-size: 13px;
}
.select i { display: flex; align-items: center; justify-content: center; width: 17px; height: 25px; border-left: 1px solid #ddd; background: linear-gradient(#f8f8f8, #e4e4e4); }
.select i::before { content: ""; border: 4.500px solid transparent; border-top: 5px solid #777; border-bottom: 0; }
.filter-row--custom .select { margin-top: -3px; }
.date { display: flex; align-items: center; width: 127px; height: 31px; padding: 2px 5px 0 3px; border: 1px solid #bbb; }
.date svg { width: 19px; height: 20px; margin: -4px 0 0 auto; color: #333; }
.date--end { padding-left: 9px; }
.dash { width: 36px; padding-left: 10px; letter-spacing: -.5px; }
.btn--search { display: flex; align-items: center; width: 56px; margin: -4px 0 0 16px; padding-left: 6px; border: 0; background: #2352ff; color: #fff; }
.btn--search svg { width: 14px; height: 18px; margin-right: 5px; }

/* trend */
.panel--trend { height: 533px; margin: 31px 0 0 15px; }
.panel--trend h2 { height: 42px; padding-left: 24px; }
.stage--trend { width: 800px; height: 376.500px; margin: 36px 0 0 30px; }
.totals { display: flex; padding: 27px 0 0 31px; font-size: 14px; line-height: 20px; }
.totals span:nth-child(1) { width: 166px; }
.totals span:nth-child(2) { width: 214px; }

/* maps */
.panel--region { height: 561px; margin: 20px 0 0 13px; }
.panel--region h2 { height: 45px; padding-left: 29px; }
.panel--region .tag { margin: 9.500px 0 17px 26px; }
.panel--region .stage { margin-left: 15px; }
.panel--service { width: 1142px; height: 597px; margin: 25px 0 0 10px; }
.panel--service h2 { padding: 16px 0 0 15px; }
.panel--service .tag { margin: 10px 0 24px 9px; padding-left: 9px; }
.panel--service .stage { margin-left: 18px; }
.stage--map { width: 1096px; height: 427px; }
.stage--map .save { margin-top: 14px; margin-right: 17px; }
.chart--map { width: 741px; height: 427px; }

/* scene clustering */
.panel--scene { width: 1143px; height: 596px; margin: 28px 0 0 16px; }
.panel--scene h2 { padding-left: 15px; }
.panel--scene .tag { margin: 10px 0 10px 15px; }
.stage--scene { width: 1099px; height: 469px; margin-left: 9px; }
.stage--scene .save { margin-top: 14px; margin-right: 8px; }
.chart--scene { width: 736px; height: 469px; }
.panel--problem { width: 1143px; height: 612px; margin: 31px 0 0 16px; }
.panel--problem h2 { padding: 5px 0 0 18px; }
.panel--problem .tag { margin: 14px 0 14px 18px; }
.stage--problem { width: 1106px; height: 462px; margin-left: 18px; }
.stage--problem .save { margin-top: 15px; margin-right: 33px; }
.chart--problem { width: 762px; height: 462px; }

/* rankings */
.panel--rank { width: 1143px; height: 597px; margin: 34px 0 0 20px; }
.rank-body { display: flex; align-items: flex-start; padding: 18px 0 0 27px; }
.stage--rank { width: 688px; height: 501px; background: #f3f3f3; }
.panel--words { width: 1143px; height: 513px; margin: 55px 0 0 20px; }
.stage--words { width: 781px; height: 343px; margin: 25px 0 0 39.500px; }

/* tables */
.grid {
  flex: none;
  border-collapse: collapse;
  table-layout: fixed;
  background: #fff;
  font: 10px/12px "Liberation Sans", "Noto Sans CJK SC", sans-serif;
  text-align: center;
  white-space: nowrap;
}
.grid th, .grid td { padding: 0; border: 1px solid #ccc; }
.grid th { background: #ccc; font-weight: bold; }
.grid tr:nth-child(even) td { background: #ffffcc; }
.grid tr { height: 20px; }
.grid--region { width: 191px; margin-top: 164px; }
.grid--region th:nth-child(1) { width: 75px; }
.grid--region th:nth-child(2) { width: 62px; }
.grid--region tr:last-child { height: 25px; }
.grid--service { width: 209px; margin-top: 162px; }
.grid--service th:nth-child(1) { width: 83px; }
.grid--service th:nth-child(2) { width: 67px; }
.grid--service tr:last-child { height: 29px; }
.grid--scene { width: 208px; margin-top: 99px; }
.grid--scene th:nth-child(1) { width: 87px; }
.grid--scene th:nth-child(2) { width: 52px; }
.grid--scene tr:nth-child(1) { height: 28px; }
.grid--scene tr:nth-child(2) { height: 34px; }
.grid--scene tr:nth-child(3) { height: 26px; }
.grid--scene tr:nth-child(4) { height: 32px; }
.grid--scene tr:nth-child(5) { height: 29px; }
.grid--scene tr:nth-child(6), .grid--scene tr:nth-child(7) { height: 36.500px; }
.grid--scene tr:nth-child(8) { height: 23px; }
.grid--problem { width: 184px; margin-top: 144px; }
.grid--problem th:nth-child(1) { width: 76.500px; }
.grid--problem th:nth-child(2) { width: 49.500px; }
.grid--problem tr { height: 36px; }
.grid--problem tr:nth-child(1) { height: 22px; }
.grid--problem tr:nth-child(2) { height: 29.500px; }
.grid--rank { width: 200px; margin: 111px 0 0 105px; font-size: 13px; line-height: 16px; }
.grid--rank th { width: 100px; }
.grid--rank tr { height: 38px; }
.grid--rank tr:nth-child(1), .grid--rank tr:nth-child(3) { height: 31px; }
.grid--rank tr:nth-child(4) { height: 44px; }
.grid--rank tr:nth-child(5) { height: 27px; }
.grid--rank tr:nth-child(7) { height: 30px; }
.grid--rank tr:nth-child(8) { height: 34px; }
.grid--rank tr:nth-child(9) { height: 33px; }
.grid--rank tr:nth-child(9) td { background: #ffffcc; }

/* chart lettering */
svg text { dominant-baseline: central; }
.system-title text { dominant-baseline: auto; }
.t-legend { font-size: 12.750px; fill: #333; }
.t-axis { font-size: 12.500px; fill: #333; letter-spacing: -.2px; }
.t-end { text-anchor: end; }
.t-mid, .t-city, .t-value, .t-bar, .t-name, .t-funnel { text-anchor: middle; }
.t-scale { font: 11px "Liberation Sans", sans-serif; fill: #777; }
.t-city { font-size: 28.500px; fill: #8b4513; opacity: .85; }
.t-value { font: 30px "Liberation Sans", "Noto Sans CJK TC", sans-serif; fill: #006666; }
.t-slice { font: bold 12px "Liberation Sans", "Noto Sans CJK TC", sans-serif; }
.t-slice--small { font-size: 11.300px; }
.t-plain { font-weight: normal; }
.t-key { font-size: 11px; fill: #333; }
.t-key--small { font-size: 9.500px; }
.t-bar { font-size: 14px; fill: #4f93d9; }
.t-name { font-size: 15px; fill: #555; }
.t-name--small { font-size: 13px; }
.t-word { font-size: 12.200px; fill: #333; }
.t-word--big { font-size: 14.300px; }
.t-funnel { font-size: 12.200px; fill: #fff; }
```
